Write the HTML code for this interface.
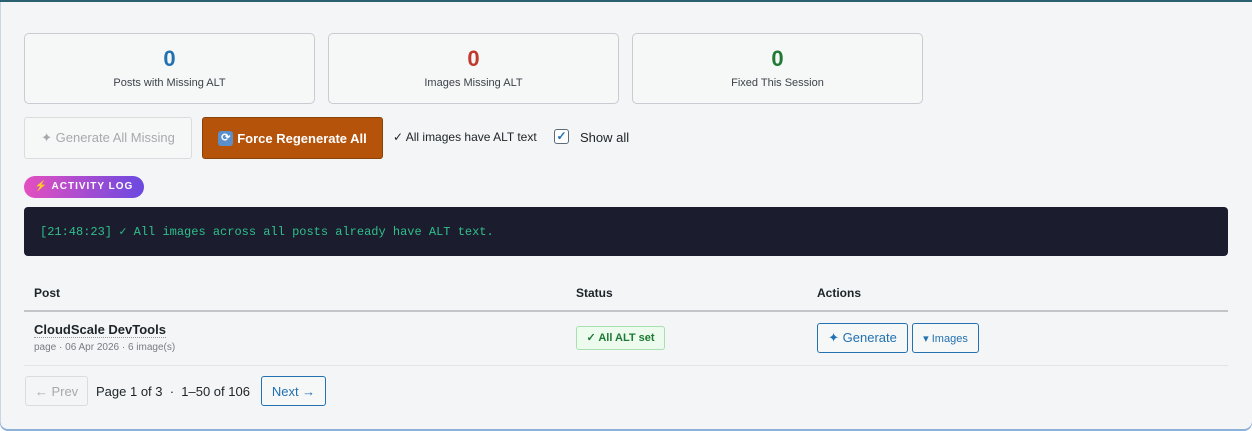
<!DOCTYPE html>
<html><head><style>
*{box-sizing:border-box;margin:0;padding:0}
body{width:1252px;height:431px;background:#fff;font-family:"Liberation Sans",sans-serif;overflow:hidden;position:relative}
.wrap{position:absolute;left:0;top:0;width:1252px;height:431px;background:#f3f5f7;box-shadow:inset 0 2px 0 #2a6070,inset 0 -2px 0 #8fb0d8,inset 1px 0 0 #c9d6e4;border-radius:0 0 8px 8px}
.abs{position:absolute}
.card{position:absolute;top:33px;width:291px;height:71px;border:1px solid #c9ccd1;border-radius:5px;background:#f6f7f7;text-align:center}
.card b{display:block;font-size:22px;margin-top:12px;line-height:26px}
.card span{display:block;font-size:11px;color:#3c434a;margin-top:5px}
.btn{position:absolute;border-radius:3px;font-size:13px;display:flex;align-items:center;justify-content:center}
</style></head><body><div class="wrap">
<div class="card" style="left:24px"><b style="color:#2271b1">0</b><span>Posts with Missing ALT</span></div>
<div class="card" style="left:328px"><b style="color:#c0392b">0</b><span>Images Missing ALT</span></div>
<div class="card" style="left:632px"><b style="color:#1e7a34">0</b><span>Fixed This Session</span></div>
<div class="btn" style="left:24px;top:117px;width:168px;height:42px;border:1px solid #dcdcde;background:#f6f7f7;color:#a7aaad">✦ Generate All Missing</div>
<div class="btn" style="left:202px;top:117px;width:181px;height:42px;border:1px solid #8a4208;background:#b5530b;color:#fff;font-weight:bold"><span style="display:inline-block;width:15px;height:15px;background:#5b8fc9;border-radius:3px;margin-right:4px;color:#fff;font-size:11px;line-height:15px;text-align:center">⟳</span>Force Regenerate All</div>
<div class="abs" style="left:393px;top:130px;font-size:12px;color:#1d2327">✓ All images have ALT text</div>
<div class="abs" style="left:554px;top:129px;width:15px;height:15px;border:1px solid #5b6b7a;border-radius:3px;background:#fff;color:#2271b1;font-size:12px;line-height:13px;text-align:center;font-weight:bold">✓</div>
<div class="abs" style="left:580px;top:130px;font-size:13px;color:#1d2327">Show all</div>
<div class="abs" style="left:24px;top:176px;width:120px;height:22px;border-radius:11px;background:linear-gradient(90deg,#e44fc0,#6a4ae0);color:#fff;font-size:10px;font-weight:bold;letter-spacing:1px;line-height:22px;text-align:center"><span style="color:#f7b64a">⚡</span> ACTIVITY LOG</div>
<div class="abs" style="left:24px;top:207px;width:1204px;height:49px;background:#1b1d2e;border-radius:4px;color:#2fbf8a;font-family:'Liberation Mono',monospace;font-size:12px;padding:17px 0 0 16px">[21:48:23] ✓ All images across all posts already have ALT text.</div>
<div class="abs" style="left:34px;top:286px;font-size:12px;font-weight:bold;color:#1d2327">Post</div>
<div class="abs" style="left:576px;top:286px;font-size:12px;font-weight:bold;color:#1d2327">Status</div>
<div class="abs" style="left:817px;top:286px;font-size:12px;font-weight:bold;color:#1d2327">Actions</div>
<div class="abs" style="left:24px;top:310px;width:1204px;height:2px;background:#c3c4c7"></div>
<div class="abs" style="left:34px;top:322px;font-size:13px;font-weight:bold;color:#1d2327;border-bottom:1px dotted #999">CloudScale DevTools</div>
<div class="abs" style="left:34px;top:342px;font-size:10px;color:#787c82">page · 06 Apr 2026 · 6 image(s)</div>
<div class="abs" style="left:576px;top:326px;width:89px;height:24px;border:1px solid #a8e0b0;background:#ecfbee;border-radius:3px;color:#1e7a34;font-size:11px;font-weight:bold;line-height:22px;text-align:center">✓ All ALT set</div>
<div class="btn" style="left:817px;top:323px;width:91px;height:30px;border:1px solid #2271b1;background:#f6f7f7;color:#2271b1">✦ Generate</div>
<div class="btn" style="left:912px;top:323px;width:67px;height:30px;border:1px solid #2271b1;background:#f6f7f7;color:#2271b1;font-size:11px">▾ Images</div>
<div class="abs" style="left:24px;top:365px;width:1204px;height:1px;background:#e2e4e7"></div>
<div class="btn" style="left:25px;top:376px;width:63px;height:30px;border:1px solid #dcdcde;color:#a7aaad">← Prev</div>
<div class="abs" style="left:96px;top:384px;font-size:13px;color:#1d2327">Page 1 of 3 &nbsp;·&nbsp; 1–50 of 106</div>
<div class="btn" style="left:261px;top:376px;width:65px;height:30px;border:1px solid #2271b1;background:#f6f7f7;color:#2271b1">Next →</div>
</div></body></html>
